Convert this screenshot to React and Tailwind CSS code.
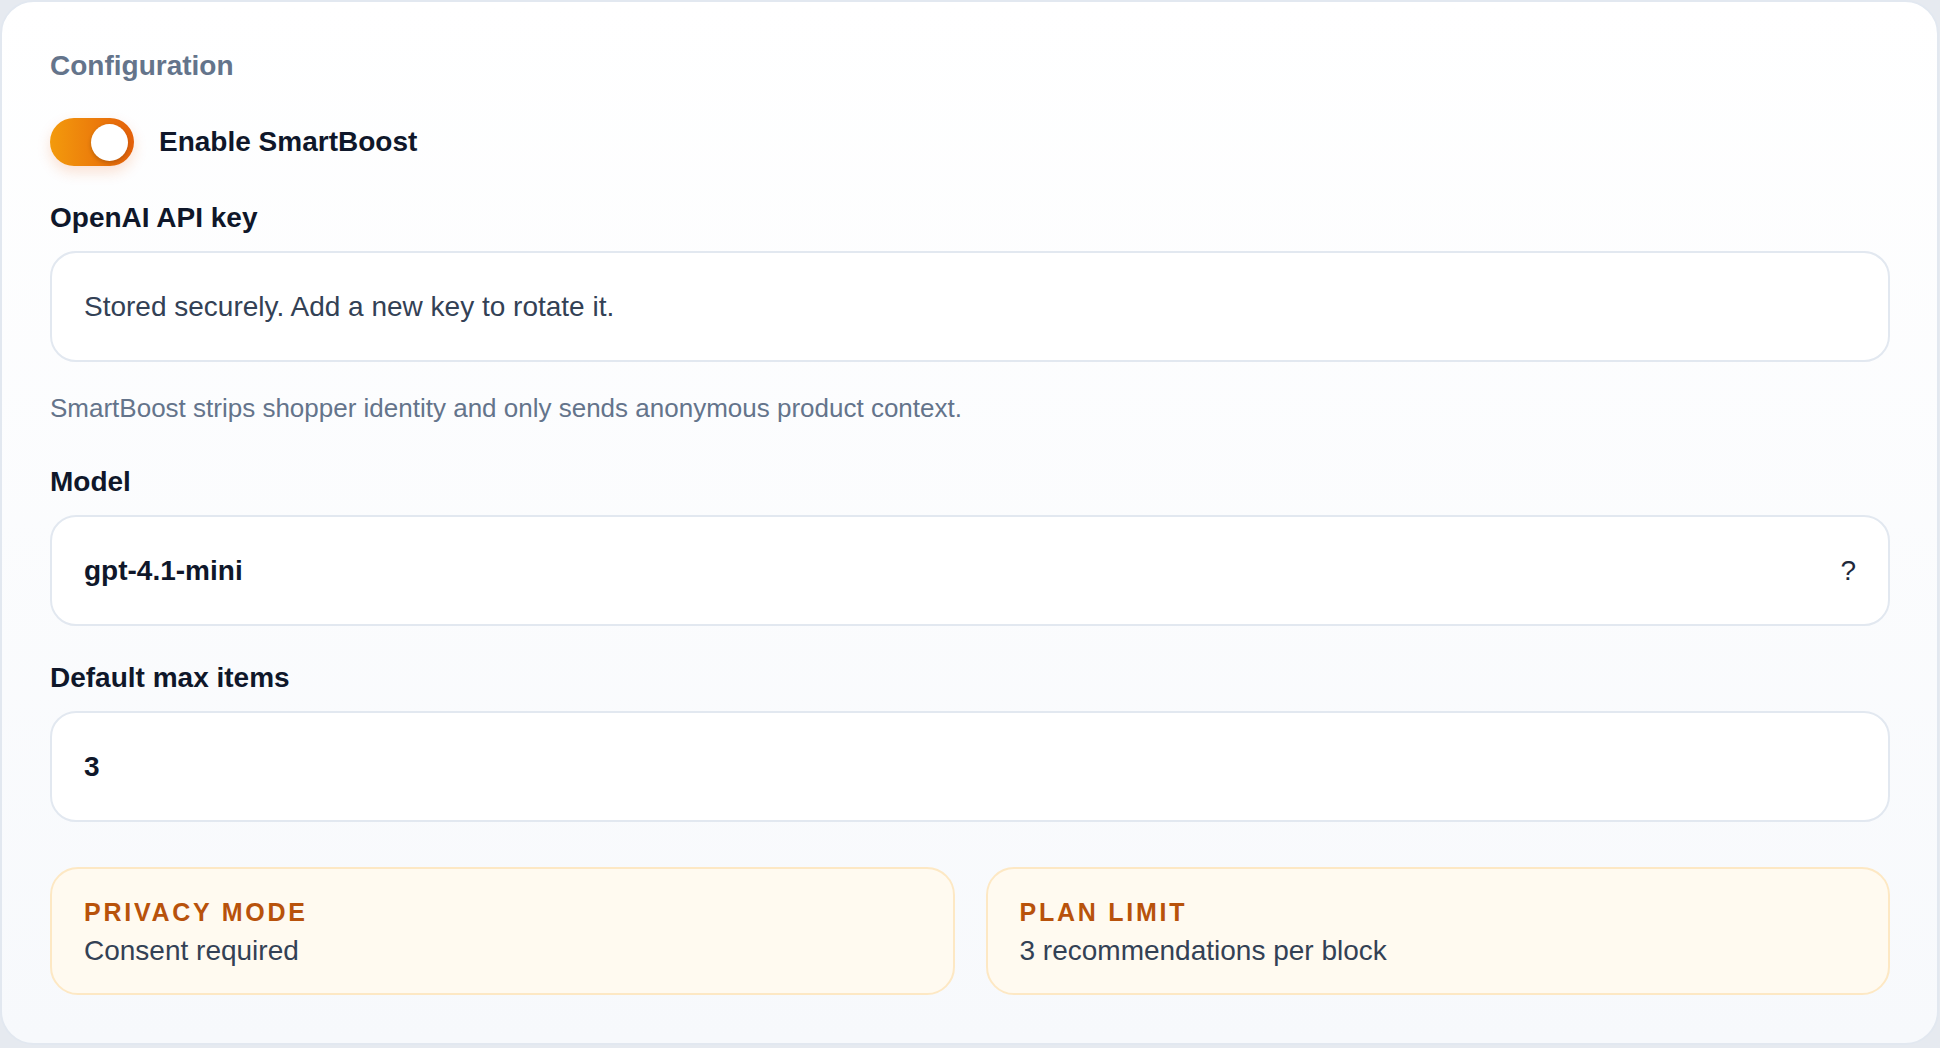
import React, { useState } from 'react';

const Field = ({ label, children, className = '' }) => (
    <div className={className}>
        <div className="text-[28px] leading-[34px] font-bold text-[#0f172a]">{label}</div>
        <div className="mt-[16px] h-[111px] flex items-center justify-between bg-white border-2 border-[#e2e8f0] rounded-[26px] pl-[32px] pr-[32px] text-[28px]">
            {children}
        </div>
    </div>
);

const InfoBox = ({ title, value }) => (
    <div className="h-[128px] bg-[#fffaf0] border-2 border-[#fde8c4] rounded-[28px] pl-[32px] pt-[28px]">
        <div className="text-[25px] leading-[30px] font-bold tracking-[0.11em] text-[#b8520b]">{title}</div>
        <div className="mt-[7px] text-[28px] leading-[34px] text-[#334155]">{value}</div>
    </div>
);

const App = () => {
    const [enabled, setEnabled] = useState(true);

    return (
        <div className="min-h-screen bg-[#e6eaf0]" style={{ fontFamily: '"Liberation Sans", Arial, sans-serif' }}>
            <div className="w-[1939px] h-[1045px] border-2 border-[#e2e8f0] rounded-[34px] bg-gradient-to-b from-white to-[#f7f9fc] pl-[48px] pr-[47px] pt-[49px]">
                <h2 className="text-[28px] leading-[30px] font-bold text-[#64748b]">Configuration</h2>

                <div className="mt-[37px] flex items-center gap-[25px]">
                    <button
                        type="button"
                        onClick={() => setEnabled(!enabled)}
                        className={`relative w-[84px] h-[48px] rounded-full shadow-[0_6px_14px_rgba(234,88,12,0.18)] ${enabled ? 'bg-gradient-to-r from-[#f39a0c] to-[#e4600a]' : 'bg-[#cbd5e1]'}`}
                    >
                        <span className={`absolute top-[5.5px] w-[37px] h-[37px] rounded-full bg-white shadow-[0_2px_4px_rgba(0,0,0,0.2)] ${enabled ? 'left-[41px]' : 'left-[6px]'}`} />
                    </button>
                    <span className="text-[28px] leading-[34px] font-bold text-[#0f172a]">Enable SmartBoost</span>
                </div>

                <Field label="OpenAI API key" className="mt-[35px]">
                    <span className="text-[#334155]">Stored securely. Add a new key to rotate it.</span>
                </Field>

                <p className="mt-[29px] text-[26px] leading-[34px] text-[#64748b]">
                    SmartBoost strips shopper identity and only sends anonymous product context.
                </p>

                <Field label="Model" className="mt-[40px]">
                    <span className="font-bold text-[#0f172a]">gpt-4.1-mini</span>
                    <span className="text-[#1e293b]">?</span>
                </Field>

                <Field label="Default max items" className="mt-[35px]">
                    <span className="font-bold text-[#0f172a]">3</span>
                </Field>

                <div className="mt-[45px] grid grid-cols-2 gap-[31px]">
                    <InfoBox title="PRIVACY MODE" value="Consent required" />
                    <InfoBox title="PLAN LIMIT" value="3 recommendations per block" />
                </div>
            </div>
        </div>
    );
};

export default App;
